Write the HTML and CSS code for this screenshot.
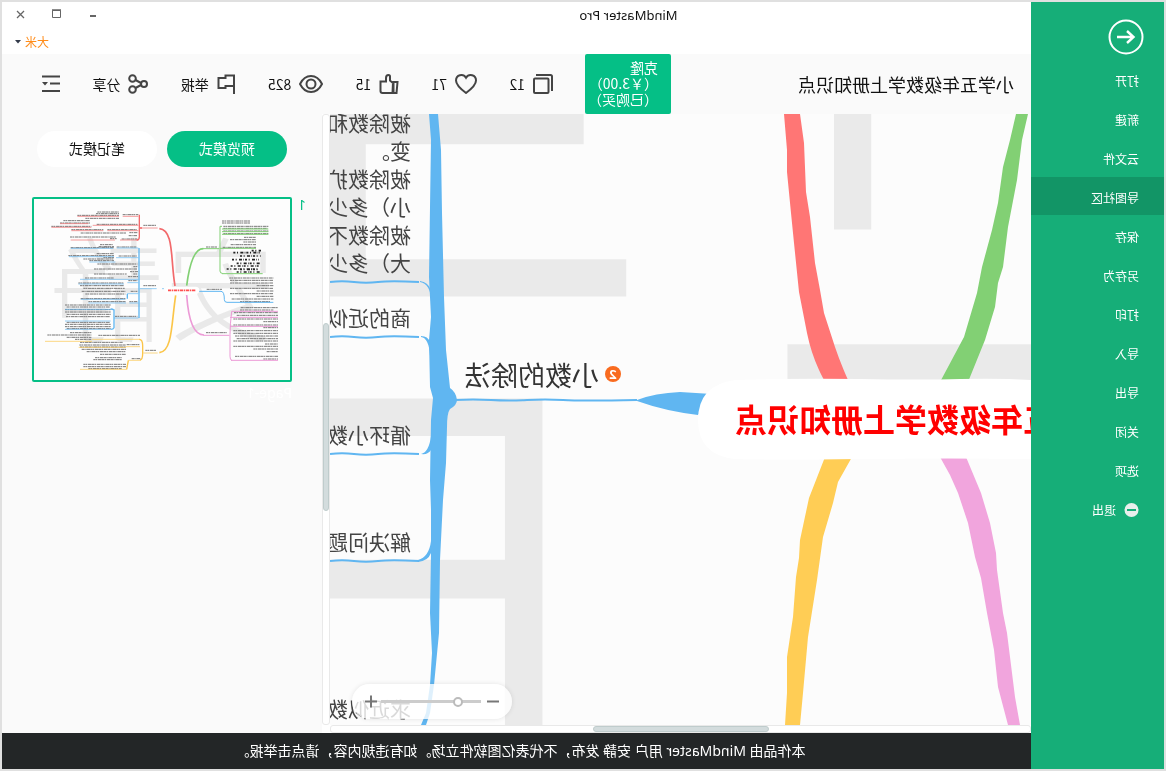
FILE: index.html
```html
<!DOCTYPE html>
<html lang="zh-CN">
<head>
<meta charset="utf-8">
<title>MindMaster Pro</title>
<link rel="stylesheet" href="styles.css">
</head>
<body>
<div class="window">
  <aside class="sidebar">
    <button class="back" aria-label="返回">
      <svg width="36" height="36" viewBox="0 0 36 36" fill="none" stroke="#fff" stroke-width="2"><circle cx="18" cy="18" r="16.5"/><path d="M27 18H11M17 12l-6.500 6 6.500 6" stroke-width="2.400"/></svg>
    </button>
    <nav class="menu">
      <a href="#">打开</a>
      <a href="#">新建</a>
      <a href="#">云文件</a>
      <a href="#" class="active">导图社区</a>
      <a href="#">保存</a>
      <a href="#">另存为</a>
      <a href="#">打印</a>
      <a href="#">导入</a>
      <a href="#">导出</a>
      <a href="#">关闭</a>
      <a href="#">选项</a>
      <a href="#"><svg width="15" height="15" viewBox="0 0 15 15"><circle cx="7.500" cy="7" r="7" fill="#e9efec"/><path d="M3 7h9" stroke="#16ae78" stroke-width="2"/></svg>退出</a>
    </nav>
  </aside>
  <div class="main">
    <header class="titlebar">
      <span class="app-name">MindMaster Pro</span>
      <div class="corner">
        <div class="controls">
          <button aria-label="最小化"><svg width="11" height="11" viewBox="0 0 11 11"><path d="M2 7h6" stroke="#666" stroke-width="2"/></svg></button>
          <button aria-label="最大化"><svg width="11" height="11" viewBox="0 0 11 11" fill="none" stroke="#666"><path d="M1.500 1.500h8v7h-8z"/><path d="M1 1h9" stroke-width="1.500"/></svg></button>
          <button aria-label="关闭窗口"><svg width="11" height="11" viewBox="0 0 11 11"><path d="M2 2l7 7M9 2l-7 7" stroke="#666" stroke-width="1.300"/></svg></button>
        </div>
        <button class="user">大米<svg width="6" height="4" viewBox="0 0 6 4"><path d="M0 0h6L3 3.500z" fill="#333a4a"/></svg></button>
      </div>
    </header>
    <div class="toolbar">
      <h1 class="doc-title">小学五年级数学上册知识点</h1>
      <button class="clone">克隆<br>（￥3.00）<br>（已购买）</button>
      <div class="stats">
        <button><svg width="20" height="20" viewBox="0 0 20 20"><rect x="4.500" y="4.500" width="14.500" height="14.500" rx="1"/><path d="M1 17V2.500Q1 1 2.500 1H17"/></svg>12</button>
        <button><svg width="22" height="20" viewBox="0 0 22 20"><path d="M11 19C5 14.500 1 11 1 6.500 1 1 8 -1 11 3.800 14 -1 21 1 21 6.500 21 11 17 14.500 11 19z"/></svg>71</button>
        <button><svg width="20" height="20" viewBox="0 0 20 20"><path d="M1.500 8h4v11h-3zM5.500 9.500L9 6.500V2.500Q9 1 10.500 1 13 1 13 4v3.500h5.500V17q0 2-2 2h-11M6 8l.5 11"/></svg>15</button>
        <button><svg width="24" height="20" viewBox="0 0 24 20"><path d="M1 10Q5 2 12 2t11 8q-4 8-11 8T1 10z"/><circle cx="12" cy="10" r="4.500"/></svg>825</button>
        <button><svg width="19" height="20" viewBox="0 0 19 20"><path d="M2 20V1.500h8.500V4h7v10h-7v-2H2"/></svg>举报</button>
        <button><svg width="20" height="20" viewBox="0 0 20 20"><circle cx="4" cy="10" r="3"/><circle cx="15.500" cy="4.500" r="3.300"/><circle cx="15.500" cy="15.500" r="3.300"/><path d="M7 9l5.500-3M7 11l5.500 3"/></svg>分享</button>
        <button aria-label="面板"><svg width="18" height="20" viewBox="0 0 18 20"><path d="M0 2.500h18M0 9.500h10M0 17h18"/><path d="M12 8h6l-3 3.500z" fill="#444" stroke="none"/></svg></button>
      </div>
    </div>
    <div class="workspace">
      <div class="viewer">
        <div class="canvas">
          <svg class="map" width="701" height="611" viewBox="0 0 701 611">
            <text class="watermark" x="-951" y="794">安静</text>
            <g transform="translate(1031 -114) scale(-1 1)">
              <path fill="#ff7675" d="M784 114L787 150 787 172 791 213 794 243 799 292 807 333Q812 358 824 380L848 380Q840 362 835 347L824 313 820 290 815 263 810 217 806 192 804 143 800 114z"/>
              <path fill="#82d074" d="M1016 114L1010 140 1003 167 998 203 992 230 982 267 977 293 964 337 940 382H968L985 340 995 307 998 283 1003 267 1008 227 1017 180 1022 140 1028 114z"/>
              <path fill="#ffcd55" d="M825 457L809 498 800 540 799 558 796 577 793 617 787 657 787 693 785 725H800L803 693 808 637 817 580 823 537 833 503 838 482 852 457z"/>
              <path fill="#f1a5dd" d="M940 457L950 475 958 493 968 523 975 557 981 578 987 613 994 650 998 687 1008 725H1020L1015 697 1007 633 1003 613 997 570 996 553 990 523 981 493 966 457z"/>
              <path fill="#60b6f1" d="M429 114L431 140 430 207 429 277 431 317 429 340 430 387 433 398 431 420 430 480 431 510 431 553 430 613 432 653 430 685 426 713 421 725H426L430 713 434 685 439 633 440 560 443 500 446 463 447 427Q447 413 450 409 457 405 457 400 456 392 450 388L446 350 444 297 442 213 441 150 438 114z"/>
              <path fill="#60b6f1" d="M420 282Q431 284 431 302V290Q428 282 420 281zM421 337Q429 338 430 356V342Q428 336 421 336zM421 454Q429 452 431 436V450Q428 455 421 454zM418 560Q429 557 431 541V553Q428 561 418 562zM637 400Q655 393 680 392L712 394 698 415Q665 411 637 401z"/>
              <path fill="none" stroke="#60b6f1" stroke-width="2" d="M330 282q12-1.500 24 0t24 0 41 0M330 337q12-1.500 24 0t24 0 41 0M330 454q12-1.500 24 0t24 0 41 0M330 561q12-1.500 24 0t24 0 41 0M455 400q18-1 36 0t36 0 36 0 74 0"/>
              <path fill="#fff" d="M735 380Q800 378 860 379T960 379 1031 380V459Q950 458 860 459T735 459Q698 455 698 420T735 380z"/>
            </g>
            <g class="topic">
              <text x="620" y="17">被除数和除数</text>
              <text x="620" y="45">变。</text>
              <text x="620" y="73">被除数扩大</text>
              <text x="620" y="101">小）多少倍</text>
              <text x="620" y="129">被除数不变</text>
              <text x="620" y="157">大）多少倍</text>
              <text x="620" y="212">商的近似数</text>
              <text x="620" y="329">循环小数</text>
              <text x="620" y="436">解决问题</text>
              <text x="620" y="603">求近似数</text>
            </g>
            <circle cx="418" cy="260" r="8" fill="#f96b1f"/>
            <text class="priority" x="418" y="265">2</text>
            <text class="branch" x="432" y="272">小数的除法</text>
            <text class="center-topic" x="296" y="318">小学五年级数学上册知识点</text>
          </svg>
          <div class="zoom">
            <button aria-label="缩小"><svg width="13" height="13" viewBox="0 0 13 13"><path d="M0 6.500h12" stroke="#777" stroke-width="2"/></svg></button>
            <input type="range" min="0" max="100" value="21" aria-label="缩放比例">
            <button aria-label="放大"><svg width="13" height="13" viewBox="0 0 13 13"><path d="M0 6.500h12M6 .5v12" stroke="#777" stroke-width="2"/></svg></button>
          </div>
        </div>
        <div class="vbar"><div class="grip"></div></div>
        <div class="hbar"><div class="grip"></div></div>
      </div>
      <section class="panel">
        <div class="modes">
          <button class="mode on">预览模式</button>
          <button class="mode">笔记模式</button>
        </div>
        <div class="page">
          <span class="page-no">1</span>
          <div class="page-card">
            <div class="thumb">
              <svg width="256" height="181" viewBox="42 237 768 543">
                <text class="thumb-mark" x="80" y="640">安静</text>
                <g transform="translate(852 0) scale(-1 1)" fill="none">
                  <g class="rows">
                    <path d="M232 276H297M228 281H297M172 286H297M308 284H355M196 295H297M130 302H210M120 309H210M94 319H214M230 313H352M154 329H250M262 329H350M182 339H318M328 338H352M150 351H288M326 347H352M270 356H290M305 357H352M370 316H408"/>
                    <path d="M240 374H278M236 380H282M152 383H282M290 381H350M230 401H282M145 407H282M250 413H282M296 408H350M190 417H282M208 422H282"/>
                    <path d="M232 432H352M340 440H354M222 447H352M330 455H354M340 462H354M222 462H320M324 470H354M195 474H282M325 482H352M175 489H310M180 497H312M190 505H314M185 514H316M332 514H352M196 522H316M182 536H316M205 545H318M328 545H352M370 497H408"/>
                    <path d="M135 555H272M140 561H270M135 569H272M135 576H272M140 583H272M138 590H270M285 589H352M140 607H270M135 613H272M135 620H272M140 626H272"/>
                    <path d="M150 638H214M82 645H214M235 646H360M140 652H214M165 658H214M180 667H308M178 675H318M320 674H360M180 681H318M185 688H318M200 695H318M240 703H318M225 713H305M220 719H305M335 716H362M190 733H318M190 740H318M205 746H305M376 691H408"/>
                    <path d="M606 303H690M606 309H690M610 319H745M610 325H742M610 333H745M610 341H745M672 352H708M630 359H708M670 366H708M632 374H708M608 382H708M558 381H592"/>
                    <path d="M628 474H760M630 481H760M630 489H760M710 497H760M630 505H760M710 513H760M630 521H760M710 529H760M635 537H760M660 545H750M560 508H606M662 563H774M660 570H760M642 578H774M650 586H774M640 597H774M730 605H774M640 615H774M730 623H774M640 632H774M640 640H774M645 648H774M650 656H774M640 663H774M735 672H774M640 679H774M700 687H774M740 695H774M645 709H774M730 717H774M558 638H620"/>
                  </g>
                  <path class="formula" d="M695 392h28M640 398h80M660 408h62M636 419h80M650 430h72M632 438h84M660 448h60M620 447h90M650 456h70"/>
                  <g stroke="#f2696b" stroke-width="2"><path d="M172 289H297M308 289H355M120 311H205M94 322H214M218 316H355M154 332H250M262 332H355M152 360H285M300 360H355M360 324H413"/><path stroke-width="4" d="M358 284v66q0 10-8 10M358 324h8"/><path stroke-width="5" d="M418 326c45 4 33 95 47 172"/></g>
                  <g stroke="#60b6f1" stroke-width="2"><path d="M152 385H280M290 384H355M147 410H282M208 426H286M288 413H355M180 478H355M175 492H312M322 488H355M182 538H316M322 521H355M205 549H318M328 549H355M135 568H272M135 603H272M135 628H272M282 594H355M360 506H410M426 506h6"/><path stroke-width="4" d="M357 384v210M282 568v55q-2 5-10 5M282 570q-4-3-10-3M322 521v15"/><path stroke-width="3" d="M535 514h68q10 0 10 25 0 8 8 8H760"/></g>
                  <g stroke="#fbc548" stroke-width="2"><path d="M75 664H216M216 658H360M176 682H318M318 680H360M180 748H320M325 721H362M370 699H413"/><path stroke-width="4" d="M358 658q10 0 10 20v22q0 20-8 20M325 721l-5 27"/><path stroke-width="5" d="M418 698c40-4 36-90 49-172"/></g>
                  <g stroke="#82d074" stroke-width="3"><path d="M600 319H606M606 327H745M606 335H745M606 343H745M600 385H708M606 461H728M548 386H598"/><path d="M600 319v134q0 7 7 7"/><path stroke-width="5" d="M500 497q14-111 50-111"/></g>
                  <g stroke="#ec9ad6" stroke-width="3"><path d="M635 574H774M630 592H774M630 619H774M633 721H774M550 646H628"/><path d="M635 574q-5 40-5 70v65q0 12 6 12"/><path stroke-width="5" d="M500 525q8 120 52 120"/></g>
                  <path stroke="#fff" stroke-width="22" stroke-linecap="round" d="M447 511h80"/>
                  <path stroke="#ff5050" stroke-width="5" stroke-dasharray="9 2 5 2" d="M444 511h84"/>
                </g>
              </svg>
            </div>
            <span class="page-name">Page-1</span>
          </div>
        </div>
      </section>
    </div>
    <footer class="notice">本作品由 MindMaster 用户 安静 发布，不代表亿图软件立场。如有违规内容，请点击举报。</footer>
  </div>
</div>
</body>
</html>
```
FILE: styles.css
```css
* { box-sizing: border-box; }
body {
  margin: 0;
  background: #fff;
  color: #111;
  font-family: "Noto Sans CJK SC", "Noto Sans", sans-serif;
}
button {
  border: 0;
  padding: 0;
  background: none;
  color: inherit;
  font: inherit;
}
a { color: inherit; text-decoration: none; }
svg { display: block; flex: none; }

/* The whole window is shown mirrored */
.window {
  display: flex;
  height: 100vh;
  border: 2px solid #e0e0e0;
  transform: scaleX(-1);
}

.sidebar {
  flex: none;
  width: 133px;
  background: #16ae78;
  color: #fff;
  font-size: 12px;
}
.back { display: block; margin: 17px 20px 5px; }
.menu { display: flex; flex-direction: column; gap: 1px; }
.menu a {
  display: flex;
  align-items: center;
  gap: 8px;
  height: 38px;
  padding: 4px 0 0 25px;
  line-height: 16px;
}
.menu .active { background: #129566; }

.main {
  flex: 1;
  min-width: 0;
  display: flex;
  flex-direction: column;
}
.titlebar {
  flex: none;
  display: flex;
  justify-content: flex-end;
  height: 52px;
  position: relative;
}
.app-name {
  position: absolute;
  left: 0;
  right: 224px;
  top: 3px;
  text-align: center;
  font: 13px/20px "Noto Sans", sans-serif;
}
.corner {
  display: flex;
  flex-direction: column;
  align-items: flex-end;
  gap: 13px;
  padding: 7px 13px 0 0;
}
.controls { display: flex; gap: 25px; }
.user {
  display: flex;
  align-items: center;
  gap: 4px;
  color: #ff8c1a;
  font-size: 12px;
  line-height: 18px;
}

.toolbar {
  flex: none;
  display: flex;
  align-items: center;
  height: 60px;
  background: #fafafa;
  padding: 0 40px 0 17px;
}
.doc-title {
  flex: none;
  width: 343px;
  margin: 0;
  font-size: 18px;
  font-weight: 400;
  line-height: 26px;
}
.clone {
  flex: none;
  width: 86px;
  height: 60px;
  margin-right: 32px;
  padding: 0 0 2px 13px;
  border-radius: 2px;
  background: #05bf86;
  color: #fff;
  font-size: 14px;
  line-height: 16px;
  text-align: left;
  white-space: nowrap;
}
.stats {
  flex: 1;
  display: flex;
  justify-content: space-between;
}
.stats button {
  display: flex;
  align-items: center;
  gap: 8px;
  font-size: 14px;
  line-height: 20px;
}
.stats svg { fill: none; stroke: #444; stroke-width: 2; }

.workspace { flex: 1; min-height: 0; display: flex; background: #fafafa; }
.viewer {
  flex: 1;
  min-width: 0;
  display: grid;
  grid-template: minmax(0, 1fr) 8px / minmax(0, 1fr) 8px;
  background: #fff;
}
.canvas { position: relative; overflow: hidden; background: #fcfcfc; }
.vbar, .hbar {
  border: 1px solid #e9e9e9;
  border-radius: 3px;
  background: #fff;
}
.grip { border: 1px solid #bfcccc; border-radius: 3px; background: #d3dcdd; }
.vbar { padding-top: 208px; }
.vbar .grip { height: 188px; }
.hbar { padding-left: 261px; }
.hbar .grip { width: 176px; height: 6px; }

.watermark { font-size: 1290px; font-weight: 100; fill: #eaeaea; }
.topic { font-size: 21px; fill: #444; }
.branch { font-size: 27px; fill: #333; }
.priority { font: 700 13px "Noto Sans", sans-serif; fill: #fff; text-anchor: middle; }
.center-topic { font-size: 32px; font-weight: 700; fill: #f00; text-anchor: end; }

.zoom {
  position: absolute;
  right: 22px;
  bottom: 6px;
  display: flex;
  align-items: center;
  justify-content: space-between;
  width: 160px;
  height: 35px;
  padding: 0 12px 0 13px;
  border-radius: 18px;
  background: rgba(255, 255, 255, 0.8);
  box-shadow: 0 0 5px rgba(0, 0, 0, 0.1);
}
.zoom input {
  appearance: none;
  width: 100px;
  height: 3px;
  margin: 0;
  background: #ccc;
}
.zoom input::-webkit-slider-thumb {
  appearance: none;
  width: 10px;
  height: 10px;
  border: 2px solid #bbb;
  border-radius: 50%;
  background: #fff;
}

.panel { flex: none; width: 320px; padding: 17px 30px 0 16px; }
.modes { display: flex; gap: 10px; padding-left: 19px; }
.mode {
  width: 120px;
  height: 36px;
  padding-bottom: 2px;
  border-radius: 18px;
  background: #fff;
  font-size: 14px;
}
.mode.on { background: #05bf86; color: #fff; }
.page { display: flex; justify-content: space-between; margin-top: 30px; }
.page-no { color: #05bf86; font: 14px/15px "Noto Sans", sans-serif; }
.page-card { width: 260px; }
.thumb {
  border: 2px solid #05bf86;
  border-radius: 2px;
  background: #fdfdfd;
}
.page-name { display: block; color: #fff; font: 14px/22px "Noto Sans", sans-serif; }
.thumb-mark { font-size: 340px; font-weight: 300; fill: #e9e9e9; }
.rows { stroke: #777; stroke-width: 3; stroke-dasharray: 7 1 4 2 11 1; }
.formula { stroke: #222; stroke-width: 5; stroke-dasharray: 6 5 3 7 9 4 2 3; }

.notice {
  flex: none;
  height: 36px;
  padding-right: 8px;
  background: #232627;
  color: #fff;
  font-family: "Noto Sans", "Noto Sans CJK SC", sans-serif;
  font-size: 14px;
  line-height: 35px;
  text-align: center;
}
```
